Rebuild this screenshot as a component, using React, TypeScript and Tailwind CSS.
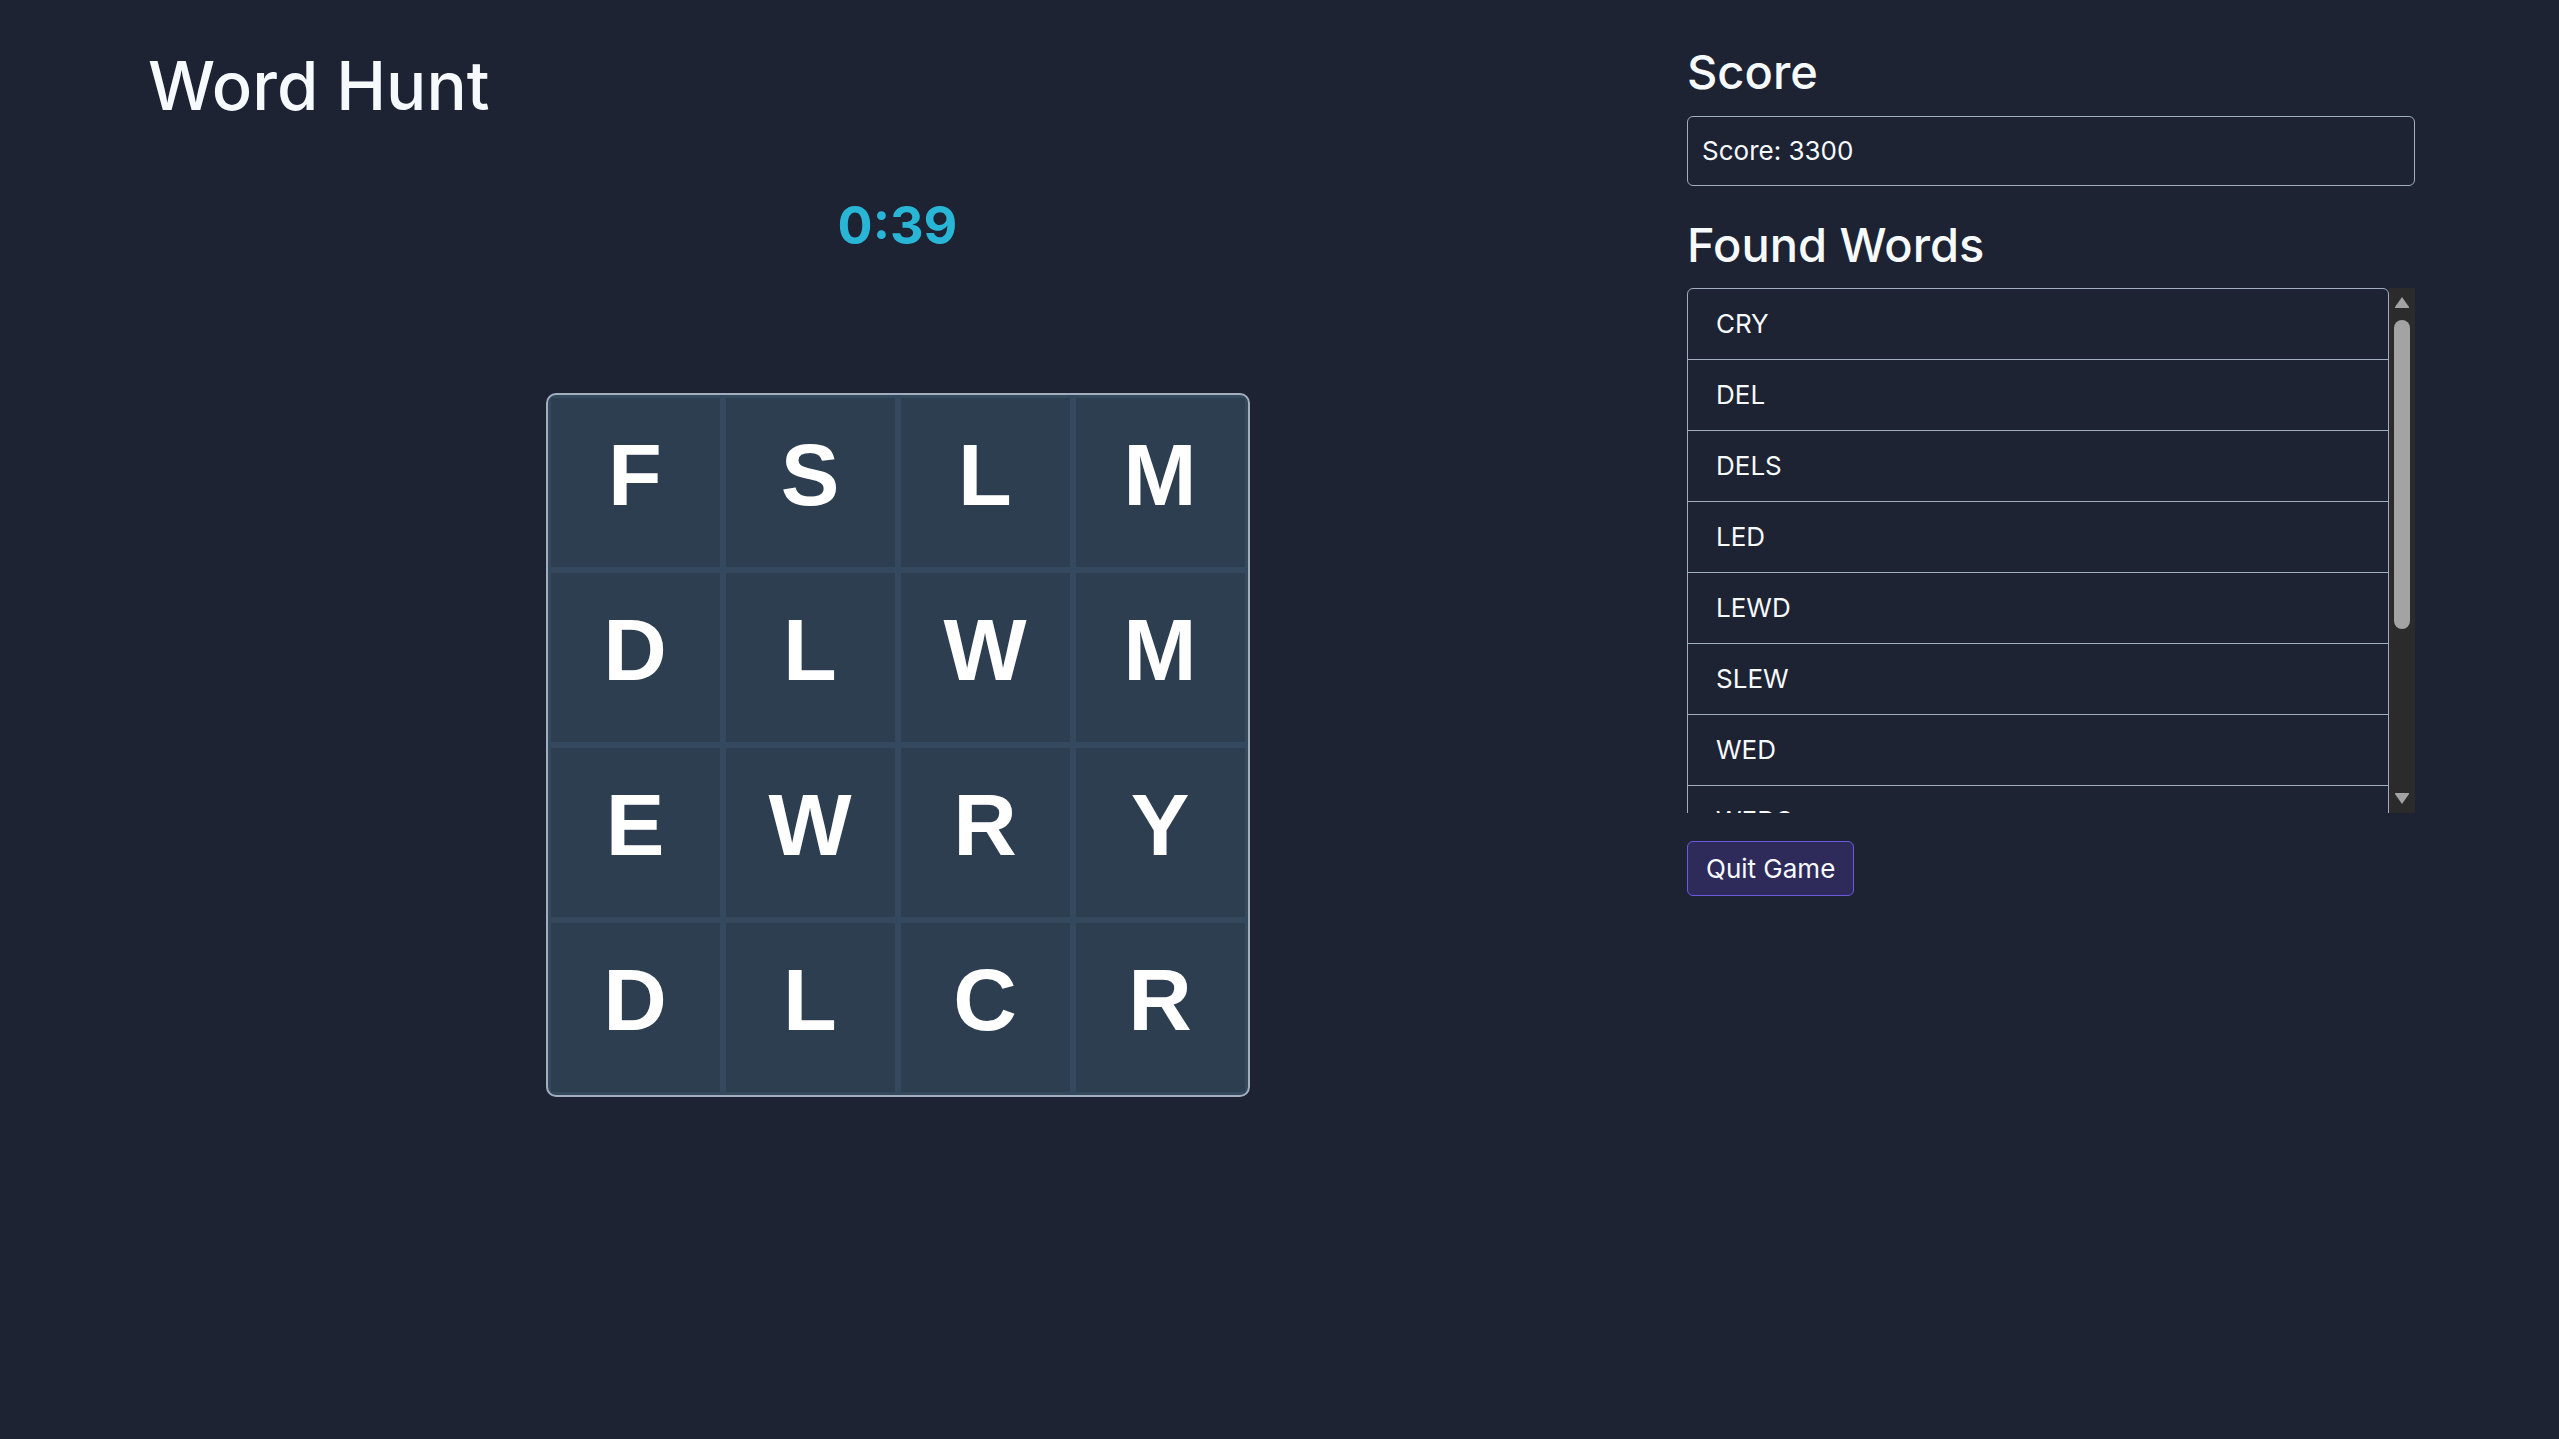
import React from "react";

const board = [
  ["F", "S", "L", "M"],
  ["D", "L", "W", "M"],
  ["E", "W", "R", "Y"],
  ["D", "L", "C", "R"],
];

const foundWords = ["CRY", "DEL", "DELS", "LED", "LEWD", "SLEW", "WED", "WEDS"];

const Board = () => (
  <div className="grid grid-cols-4 gap-[6px] overflow-hidden rounded-[10px] border-2 border-[#a0aec0] bg-[#34495e] p-[3px]">
    {board.flat().map((letter, i) => (
      <div
        key={i}
        className="flex h-[169px] w-[169px] items-center justify-center bg-[#2c3e50] pb-[15px] font-['Liberation_Sans',Arial,sans-serif] text-[88px] font-bold leading-none text-white"
      >
        {letter}
      </div>
    ))}
  </div>
);

// fake native scrollbar next to the word list
const Scrollbar = () => (
  <div className="flex h-full w-[26px] flex-col items-center bg-[#2b2b2b] pt-[8px] pb-[8px]">
    <svg width="16" height="12" viewBox="0 0 16 12">
      <path d="M8 1 L15 11 Q15.5 12 14.5 12 L1.5 12 Q0.5 12 1 11 Z" fill="#a3a3a3" />
    </svg>
    <div className="mt-[12px] h-[309px] w-[16px] rounded-full bg-[#a3a3a3]" />
    <div className="flex-1" />
    <svg width="16" height="12" viewBox="0 0 16 12">
      <path d="M1.5 0 L14.5 0 Q15.5 0 15 1 L8 11 L1 1 Q0.5 0 1.5 0 Z" fill="#a3a3a3" />
    </svg>
  </div>
);

export default function App() {
  return (
    <div className="min-h-screen w-full bg-[#1d2333] font-['Inter','Noto_Sans',sans-serif] text-[#f7fafc]">
      <div className="flex gap-[40px] pr-[144px] pl-[148px]">
        {/* game column */}
        <div className="flex flex-1 flex-col">
          <h1 className="pt-[52px] text-[67px] leading-none font-medium">Word Hunt</h1>
          <div className="mt-[81px] text-center text-[52px] leading-none font-bold text-[#29b6d6]">0:39</div>
          <div className="mt-[141px] flex justify-center">
            <Board />
          </div>
        </div>

        {/* side panel */}
        <div className="flex w-[728px] flex-col pt-[48px]">
          <h2 className="text-[47px] leading-none font-medium">Score</h2>
          <div className="mt-[21px] flex h-[70px] items-center rounded-[6px] border border-[#a0aec0] px-[14px] text-[26px] leading-none">
            Score: 3300
          </div>

          <h2 className="mt-[35px] text-[47px] leading-none font-medium">Found Words</h2>
          <div className="mt-[20px] flex h-[525px]">
            <div className="flex-1 overflow-hidden">
              <ul className="rounded-[6px] border border-[#a0aec0]">
                {foundWords.map((w) => (
                  <li
                    key={w}
                    className="flex h-[71px] items-center border-b border-[#a0aec0] pl-[28px] text-[26px] leading-none"
                  >
                    {w}
                  </li>
                ))}
              </ul>
            </div>
            <Scrollbar />
          </div>

          <div className="mt-[28px]">
            <button className="h-[55px] rounded-[6px] border border-[#6a5ae0] bg-[#2e2b5a] px-[18px] text-[26px] leading-none text-[#f7fafc]">
              Quit Game
            </button>
          </div>
        </div>
      </div>
    </div>
  );
}
